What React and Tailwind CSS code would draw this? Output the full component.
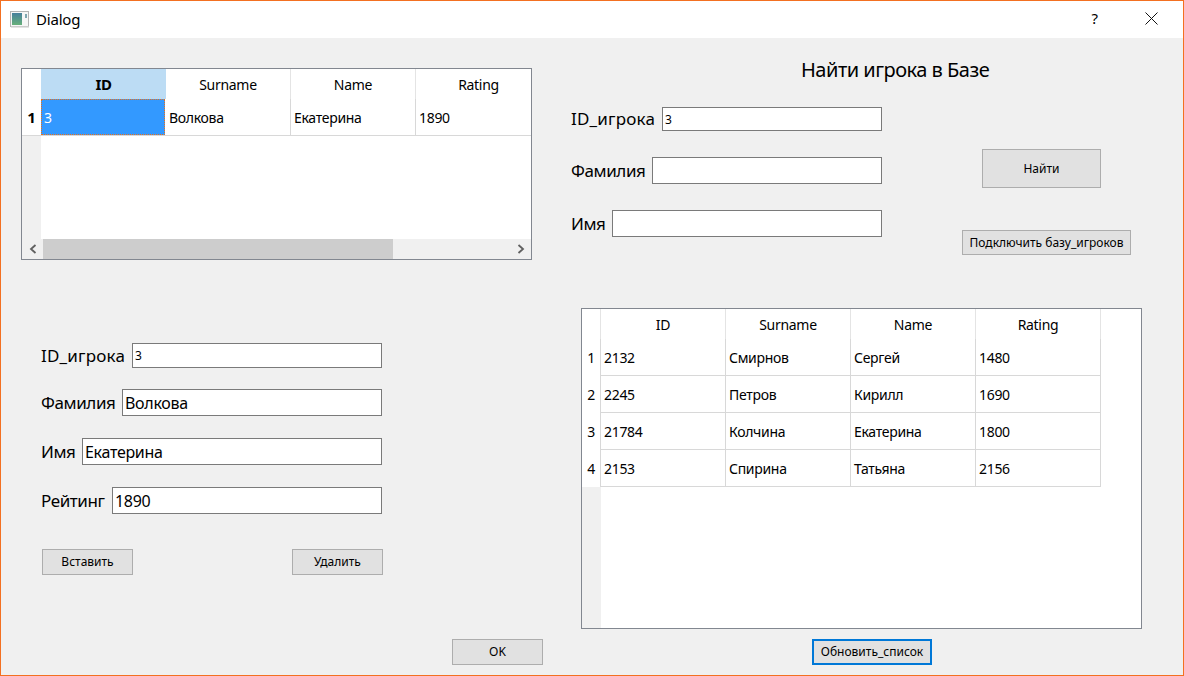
const FONT = 'font-["Noto_Sans",sans-serif]';

const playerRows = [
  ['2132', 'Смирнов', 'Сергей', '1480'],
  ['2245', 'Петров', 'Кирилл', '1690'],
  ['21784', 'Колчина', 'Екатерина', '1800'],
  ['2153', 'Спирина', 'Татьяна', '2156'],
];

const headers = ['ID', 'Surname', 'Name', 'Rating'];

const WindowIcon = () => (
  <svg width="19" height="17" viewBox="0 0 19 17" className="shrink-0">
    <defs>
      <linearGradient id="wi" x1="0" y1="0" x2="0" y2="1">
        <stop offset="0" stopColor="#47809c" />
        <stop offset="1" stopColor="#67b07a" />
      </linearGradient>
    </defs>
    <rect x="0.5" y="0.5" width="18" height="15" fill="#f6f6f6" stroke="#b4b4b4" />
    <rect x="1" y="15.5" width="18" height="1.5" fill="#e4e4e4" />
    <rect x="2" y="2" width="10" height="12" fill="url(#wi)" />
    <rect x="15" y="3" width="2" height="4" fill="#7fa6b0" />
  </svg>
);

const Field = ({ label, value, width, height, small }) => (
  <div className="flex items-center justify-between">
    <span className={`text-[17px] leading-[20px] text-black whitespace-nowrap ${small ? 'tracking-[0.2px]' : 'tracking-[-0.4px]'}`}>{label}</span>
    <input
      readOnly
      value={value}
      style={{ width, height }}
      className={`bg-white border border-[#7a7a7a] px-[2px] text-black outline-none ${small ? 'text-[12px]' : 'text-[16px] tracking-[-0.3px]'}`}
    />
  </div>
);

const Button = ({ children, className, focused }) => (
  <button className={`bg-[#e1e1e1] text-[12px] text-black flex items-center justify-center whitespace-nowrap ${focused ? 'border-2 border-[#0078d7]' : 'border border-[#adadad]'} ${className}`}>
    {children}
  </button>
);

const Chevron = ({ dir }) => (
  <svg width="10" height="10" viewBox="0 0 10 10" fill="none" stroke="#606060" strokeWidth="1.8">
    <path d={dir === 'left' ? 'M7.5 1 L3 5 L7.5 9' : 'M2.5 1 L7 5 L2.5 9'} />
  </svg>
);

const SearchResultTable = () => (
  <div className="w-[511px] h-[192px] border border-[#828790] bg-white flex flex-col overflow-hidden">
    <div className="flex-1 flex flex-col overflow-hidden">
      <div className="flex h-[30px] w-[519px] text-[14px] tracking-[-0.3px] text-black">
        <div className="w-[19px] shrink-0" />
        <div className="w-[125px] shrink-0 bg-[#bcdcf4] text-[15px] font-bold flex items-center justify-center">ID</div>
        <div className="w-[125px] shrink-0 border-r border-[#e4e4e4] flex items-center justify-center">Surname</div>
        <div className="w-[125px] shrink-0 border-r border-[#e4e4e4] flex items-center justify-center">Name</div>
        <div className="w-[125px] shrink-0 flex items-center justify-center">Rating</div>
      </div>
      <div className="flex h-[37px] w-[519px] text-[14px] tracking-[-0.3px] text-black border-b border-[#d8d8d8]">
        <div className="w-[19px] shrink-0 text-[15px] font-bold flex items-center justify-center">1</div>
        <div className="w-[124px] mr-[1px] shrink-0 h-[36px] bg-[#3399ff] border border-dotted border-[#e8701a] text-white flex items-center pl-[2px]">3</div>
        <div className="w-[125px] shrink-0 border-r border-[#d8d8d8] flex items-center pl-[3px]">Волкова</div>
        <div className="w-[125px] shrink-0 border-r border-[#d8d8d8] flex items-center pl-[3px]">Екатерина</div>
        <div className="w-[125px] shrink-0 flex items-center pl-[3px]">1890</div>
      </div>
      <div className="flex-1 flex">
        <div className="w-[19px] bg-[#f0f0f0]" />
      </div>
    </div>
    <div className="h-[20px] shrink-0 bg-[#f0f0f0] flex items-center">
      <div className="w-[21px] flex justify-center"><Chevron dir="left" /></div>
      <div className="w-[350px] h-full bg-[#cdcdcd]" />
      <div className="flex-1" />
      <div className="w-[21px] flex justify-center"><Chevron dir="right" /></div>
    </div>
  </div>
);

const PlayersTable = () => (
  <div className="w-[561px] h-[321px] ml-[10px] border border-[#828790] bg-white flex">
    <div className="w-[19px] shrink-0 flex flex-col text-[14px] tracking-[-0.3px] text-black">
      <div className="h-[30px] border-r border-[#e4e4e4]" />
      {playerRows.map((row, i) => (
        <div key={row[0]} className="h-[37px] flex items-center justify-center border-r border-[#d8d8d8]">{i + 1}</div>
      ))}
      <div className="flex-1 bg-[#f0f0f0]" />
    </div>
    <table className="h-fit w-[500px] table-fixed border-separate border-spacing-0 text-[14px] tracking-[-0.3px] text-black">
      <thead>
        <tr className="h-[30px]">
          {headers.map((h) => (
            <th key={h} className="font-normal border-r border-[#e4e4e4] p-0">{h}</th>
          ))}
        </tr>
      </thead>
      <tbody>
        {playerRows.map((row) => (
          <tr key={row[0]} className="h-[37px]">
            {row.map((cell) => (
              <td key={cell} className="border-r border-b border-[#d8d8d8] p-0 pl-[3px]">{cell}</td>
            ))}
          </tr>
        ))}
      </tbody>
    </table>
  </div>
);

export default function App() {
  return (
    <div className={`w-[1184px] h-[676px] bg-[#f0f0f0] border border-[#f37021] flex flex-col overflow-hidden ${FONT}`}>
      {/* title bar */}
      <div className="h-[37px] shrink-0 bg-white flex items-center pl-[9px] pr-[25px] text-[15px] text-black">
        <WindowIcon />
        <span className="ml-[7px] tracking-[-0.2px]">Dialog</span>
        <span className="ml-auto text-[15px] -mt-[2px]">?</span>
        <svg width="13" height="13" viewBox="0 0 13 13" className="ml-[47px] -mt-[2px]" stroke="#111" strokeWidth="1">
          <path d="M0.5 0.5 L12.5 12.5 M12.5 0.5 L0.5 12.5" />
        </svg>
      </div>

      {/* main area */}
      <div className="h-[591px] shrink-0 flex pl-[20px]">
        <div className="w-[511px] pt-[30px]">
          <SearchResultTable />
          <div className="w-[341px] ml-[20px] mt-[83px] flex flex-col">
            <Field label="ID_игрока" value="3" width={250} height={25} small />
            <div className="mt-[21px]"><Field label="Фамилия" value="Волкова" width={260} height={27} /></div>
            <div className="mt-[22px]"><Field label="Имя" value="Екатерина" width={300} height={27} /></div>
            <div className="mt-[22px]"><Field label="Рейтинг" value="1890" width={270} height={27} /></div>
            <div className="mt-[35px] flex justify-between pl-[1px] -mr-[1px]">
              <Button className="w-[91px] h-[26px]">Вставить</Button>
              <Button className="w-[91px] h-[26px]">Удалить</Button>
            </div>
          </div>
        </div>

        <div className="w-[571px] ml-[39px] flex flex-col">
          <div className="h-[270px] shrink-0">
            <div className="pt-[18px] pl-[230px] text-[20px] leading-[28px] tracking-[-0.5px] text-black whitespace-nowrap">Найти игрока в Базе</div>
            <div className="mt-[23px] flex">
              <div className="w-[311px] flex flex-col">
                <Field label="ID_игрока" value="3" width={220} height={24} small />
                <div className="mt-[26px]"><Field label="Фамилия" value="" width={230} height={27} /></div>
                <div className="mt-[26px]"><Field label="Имя" value="" width={270} height={27} /></div>
              </div>
              <div className="ml-[80px] w-[169px] flex flex-col">
                <Button className="w-[119px] h-[39px] ml-[20px] mt-[42px] pt-[1px]">Найти</Button>
                <Button className="w-[169px] h-[25px] mt-[42px]">Подключить базу_игроков</Button>
              </div>
            </div>
          </div>
          <PlayersTable />
        </div>
      </div>

      {/* bottom buttons */}
      <div className="mt-[10px] ml-[451px] flex">
        <Button className="w-[91px] h-[26px]">OK</Button>
        <Button focused className="w-[120px] h-[26px] ml-[269px]">Обновить_список</Button>
      </div>
    </div>
  );
}
